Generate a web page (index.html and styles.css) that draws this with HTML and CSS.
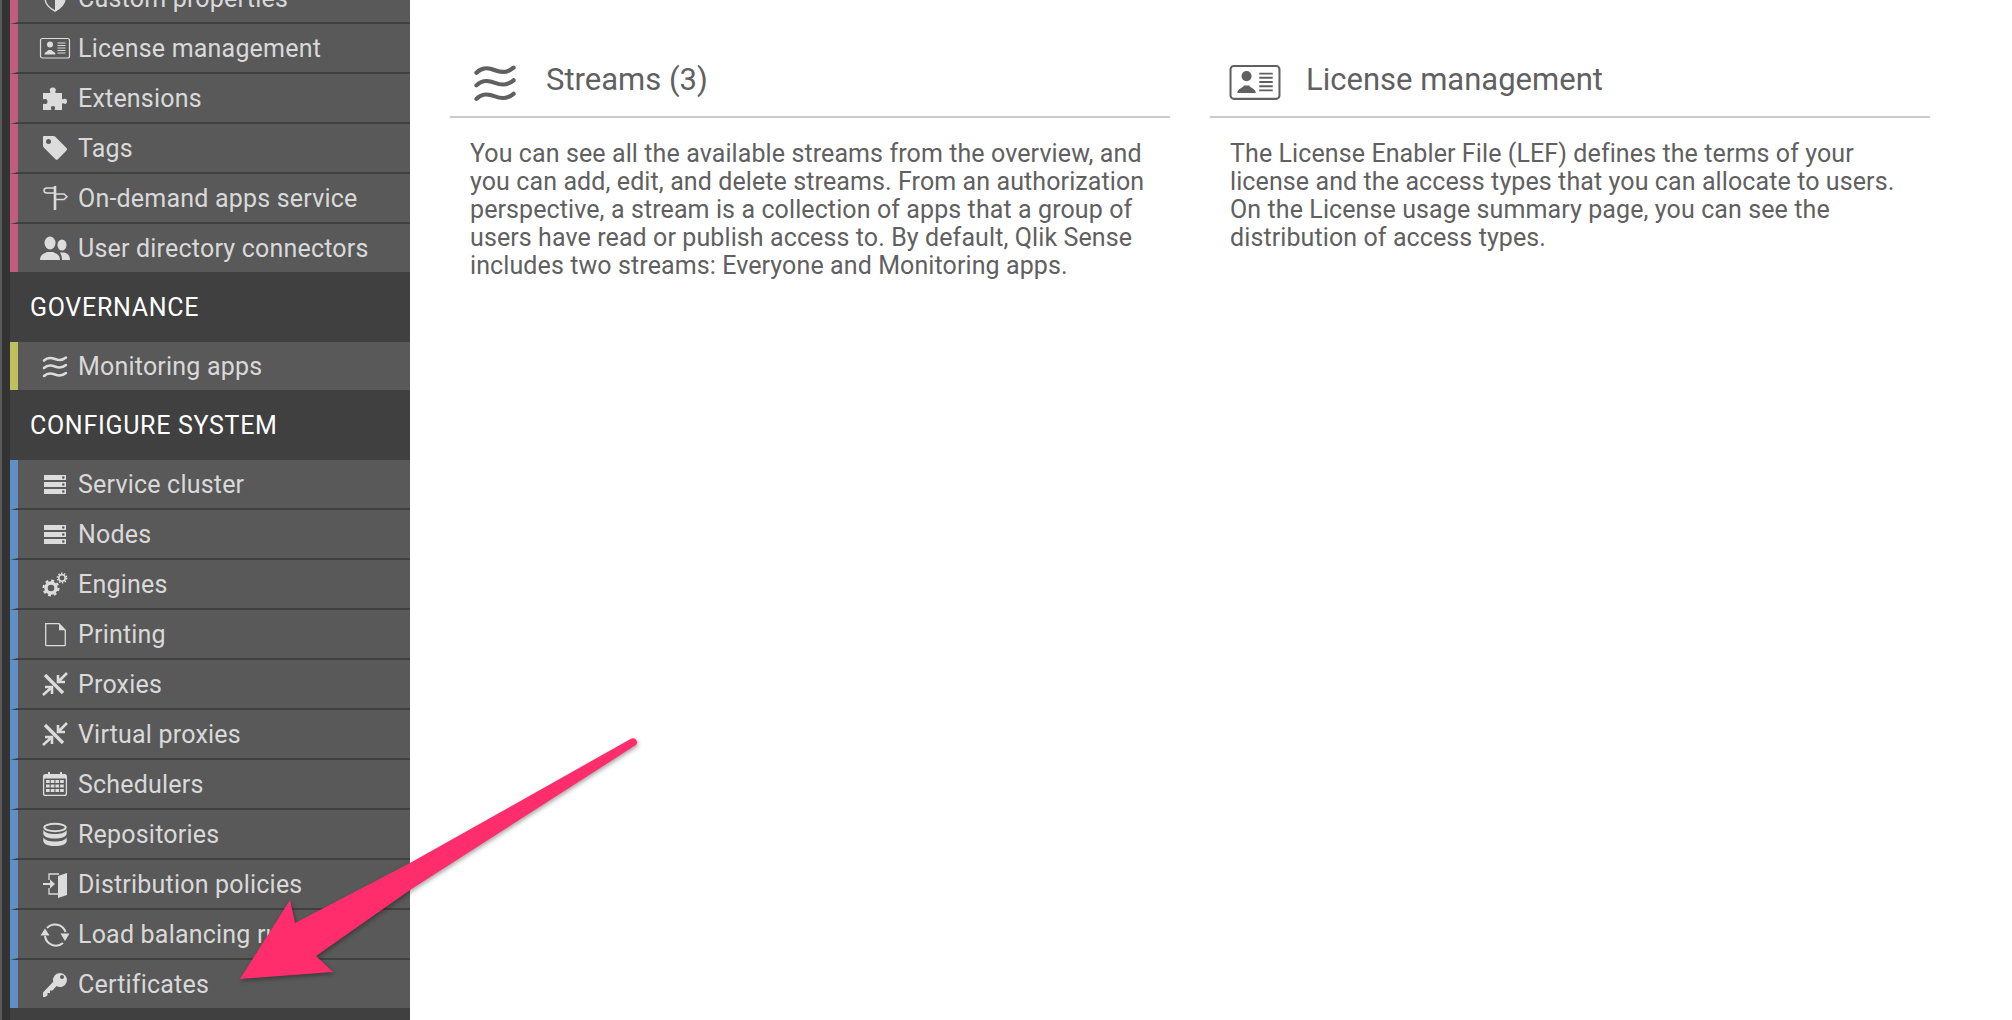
FILE: index.html
```html
<!DOCTYPE html>
<html lang="en">
<head>
    <meta charset="UTF-8">
    <meta name="viewport" content="width=device-width, initial-scale=1.0">
    <title>QMC start</title>
    <link rel="stylesheet" href="styles.css">
</head>
<body>
    <svg class="sprite" xmlns="http://www.w3.org/2000/svg">
        <symbol id="i-shield" viewBox="0 0 32 32">
            <path d="M16 4l10 3v9c0 7-6 11-10 13-4-2-10-6-10-13V7z" fill="none" stroke="currentColor" stroke-width="1.4"/>
            <path d="M16 4l10 3v9c0 7-6 11-10 13z" fill="currentColor"/>
        </symbol>
        <symbol id="i-license" viewBox="0 0 32 32">
            <rect x="1.5" y="6.5" width="29" height="19.500" rx="2" fill="none" stroke="currentColor" stroke-width="1.2"/>
            <circle cx="11" cy="12.500" r="3" fill="currentColor"/>
            <path d="M5.500 22.500c0-2.500 3-3 4-4.500h3c1 1.500 4 2 4 4.500z" fill="currentColor"/>
            <path d="M18.500 11h8M18.500 13.500h8M18.500 16h8M18.500 18.500h8M18.500 21h8" stroke="currentColor" stroke-width="1.1"/>
        </symbol>
        <symbol id="i-puzzle" viewBox="0 0 32 32">
            <path fill="currentColor" d="M4 11h6.500c1 0 1-1 .5-2-.8-1.500.3-3.500 2.800-3.500s3.600 2 2.800 3.500c-.5 1-.5 2 .5 2H23v5.500c0 1 1 1 2 .5 1.200-.7 3-.2 3 2.300s-1.800 3-3 2.300c-1-.5-2-.5-2 .5V28h-6.500c-1 0-1-1-.5-1.800.6-1-.4-2.200-2-2.200s-2.600 1.200-2 2.200c.5.8.5 1.800-.5 1.800H4v-5.500c0-1 1-1 1.800-.6 1 .5 2.700-.2 2.700-2.400s-1.700-2.900-2.700-2.400c-.8.4-1.800.4-1.800-.6z"/>
        </symbol>
        <symbol id="i-tag" viewBox="0 0 32 32">
            <path fill="currentColor" fill-rule="evenodd" d="M5 4h9.500c.8 0 1.300.3 1.800.8L27.500 16c.7.7.7 1.700 0 2.400l-8.600 8.800c-.7.7-1.700.7-2.400 0L5 15.800c-.6-.6-1-1.200-1-2V5c0-.6.4-1 1-1zM7 9.500a2.500 2.500 0 1 0 5 0a2.500 2.500 0 1 0-5 0z"/>
        </symbol>
        <symbol id="i-sign" viewBox="0 0 32 32">
            <path d="M16 4v24" stroke="currentColor" stroke-width="2.600" fill="none"/>
            <path d="M16 6H8c-4 0-4 5 0 5h8M16 12h9l3 2.700-3 2.800h-9" stroke="currentColor" stroke-width="1.500" fill="none"/>
        </symbol>
        <symbol id="i-users" viewBox="0 0 32 32">
            <ellipse cx="11" cy="11" rx="5.500" ry="6.500" fill="currentColor"/>
            <path d="M1 28c0-5 3-6 7-8h6c4 2 7 3 7 8z" fill="currentColor"/>
            <ellipse cx="23" cy="13" rx="4.500" ry="5.500" fill="currentColor"/>
            <path d="M21 20.500h4c3.500 1 6 2.500 6 7.500h-8c0-3-.8-5.500-2-7.500z" fill="currentColor"/>
        </symbol>
        <symbol id="i-waves" viewBox="0 0 32 32">
            <path d="M5 10.500c3-3 6-3.500 11-1.500s8 1 11-1.500M5 18c3-3 6-3.500 11-1.500s8 1 11-1.500M5 26c3-3 6-3.500 11-1.500s8 1 11-1.500" fill="none" stroke="currentColor" stroke-width="2.500" stroke-linecap="round"/>
        </symbol>
        <symbol id="i-server" viewBox="0 0 32 32">
            <path fill="currentColor" fill-rule="evenodd" d="M5 7h22v5H5zM23 9.500a1.300 1.300 0 1 0 2.600 0a1.300 1.300 0 1 0-2.600 0zM5 14h22v5H5zM23 16.500a1.300 1.300 0 1 0 2.600 0a1.300 1.300 0 1 0-2.600 0zM5 21h22v5H5zM23 23.500a1.300 1.300 0 1 0 2.600 0a1.300 1.300 0 1 0-2.600 0z"/>
        </symbol>
        <symbol id="i-gears" viewBox="0 0 32 32">
            <g fill="none" stroke="currentColor">
                <circle cx="12" cy="20" r="5" stroke-width="3.400"/>
                <circle cx="12" cy="20" r="7.400" stroke-width="2.200" stroke-dasharray="2.900 2.900"/>
                <circle cx="23" cy="10" r="3.200" stroke-width="1.600"/>
                <circle cx="23" cy="10" r="4.700" stroke-width="1.400" stroke-dasharray="1.480 1.470"/>
            </g>
        </symbol>
        <symbol id="i-doc" viewBox="0 0 32 32">
            <path d="M6.700 5.700H20l6.300 6.500v14.500a1 1 0 0 1-1 1H7.700a1 1 0 0 1-1-1z" fill="none" stroke="currentColor" stroke-width="1.300"/>
            <path d="M20 5.700l6.300 6.500H20z" fill="currentColor"/>
        </symbol>
        <symbol id="i-proxy" viewBox="0 0 32 32">
            <path d="M6 7l18 18" stroke="currentColor" stroke-width="3.400" fill="none"/>
            <path d="M28 5l-9 9M19 7v7h7M4 27l9-8M6 19h7v7" stroke="currentColor" stroke-width="2.600" fill="none"/>
        </symbol>
        <symbol id="i-calendar" viewBox="0 0 32 32">
            <rect x="4.600" y="6.600" width="22.800" height="20.800" rx="2" fill="none" stroke="currentColor" stroke-width="1.300"/>
            <path d="M5 7h22v3.500H5z" fill="currentColor"/>
            <path d="M10 4v4M22 4v4" stroke="currentColor" stroke-width="2"/>
            <path d="M7 13.500h18M7 18h18M7 22.500h18" stroke="currentColor" stroke-width="3.200" stroke-dasharray="3.700 1"/>
        </symbol>
        <symbol id="i-database" viewBox="0 0 32 32">
            <ellipse cx="16" cy="9.500" rx="10.700" ry="3.700" fill="none" stroke="currentColor" stroke-width="2"/>
            <path fill="currentColor" d="M4.300 12c2 3 6 4 11.700 4s9.700-1 11.700-4v3.500c0 3-5 5-11.700 5s-11.700-2-11.700-5zM4.300 19.500c2 3 6 4 11.700 4s9.700-1 11.700-4v3.500c0 3-5 5-11.700 5s-11.700-2-11.700-5z"/>
        </symbol>
        <symbol id="i-door" viewBox="0 0 32 32">
            <path d="M19 8l9-3v22l-9 3z" fill="currentColor"/>
            <path d="M20 6H10v6M10 20v6h9" fill="none" stroke="currentColor" stroke-width="1.300"/>
            <path d="M4 16h10" stroke="currentColor" stroke-width="2"/>
            <path d="M11 11.500l5 4.500-5 4.500z" fill="currentColor"/>
        </symbol>
        <symbol id="i-sync" viewBox="0 0 32 32">
            <path d="M8 10a11 11 0 0 1 18.500 4M24 25a11 11 0 0 1-18-7" fill="none" stroke="currentColor" stroke-width="2"/>
            <path d="M1.500 17.500h9l-4.500-7zM21.500 15.500h9l-4.500 7.500z" fill="currentColor"/>
        </symbol>
        <symbol id="i-key" viewBox="0 0 32 32">
            <path fill="currentColor" fill-rule="evenodd" d="M21 5a7 7 0 1 1-3.500 13.100L13.500 22.500H11V25H8.500v2.500L6 29H4v-4.500l10.200-10.700A7 7 0 0 1 21 5zM21 9a2 2 0 1 0 4 0a2 2 0 1 0-4 0z"/>
        </symbol>
    </svg>

    <div class="app">
        <aside class="sidebar">
            <nav class="nav">
                <ul class="group pink">
                    <li class="item"><svg class="icon"><use href="#i-shield"/></svg>Custom properties</li>
                    <li class="item"><svg class="icon"><use href="#i-license"/></svg>License management</li>
                    <li class="item"><svg class="icon"><use href="#i-puzzle"/></svg>Extensions</li>
                    <li class="item"><svg class="icon"><use href="#i-tag"/></svg>Tags</li>
                    <li class="item"><svg class="icon"><use href="#i-sign"/></svg>On-demand apps service</li>
                    <li class="item"><svg class="icon"><use href="#i-users"/></svg>User directory connectors</li>
                </ul>
                <h2 class="group-title">GOVERNANCE</h2>
                <ul class="group yellow">
                    <li class="item"><svg class="icon"><use href="#i-waves"/></svg>Monitoring apps</li>
                </ul>
                <h2 class="group-title">CONFIGURE SYSTEM</h2>
                <ul class="group blue">
                    <li class="item"><svg class="icon"><use href="#i-server"/></svg>Service cluster</li>
                    <li class="item"><svg class="icon"><use href="#i-server"/></svg>Nodes</li>
                    <li class="item"><svg class="icon"><use href="#i-gears"/></svg>Engines</li>
                    <li class="item"><svg class="icon"><use href="#i-doc"/></svg>Printing</li>
                    <li class="item"><svg class="icon"><use href="#i-proxy"/></svg>Proxies</li>
                    <li class="item"><svg class="icon"><use href="#i-proxy"/></svg>Virtual proxies</li>
                    <li class="item"><svg class="icon"><use href="#i-calendar"/></svg>Schedulers</li>
                    <li class="item"><svg class="icon"><use href="#i-database"/></svg>Repositories</li>
                    <li class="item"><svg class="icon"><use href="#i-door"/></svg>Distribution policies</li>
                    <li class="item"><svg class="icon"><use href="#i-sync"/></svg>Load balancing rules</li>
                    <li class="item"><svg class="icon"><use href="#i-key"/></svg>Certificates</li>
                </ul>
            </nav>
        </aside>

        <main class="content">
            <section class="panel">
                <header class="panel-head">
                    <svg class="panel-icon"><use href="#i-waves"/></svg>
                    <h1>Streams (3)</h1>
                </header>
                <p>You can see all the available streams from the overview, and you can add, edit, and delete streams. From an authorization perspective, a stream is a collection of apps that a group of users have read or publish access to. By default, Qlik Sense includes two streams: Everyone and Monitoring apps.</p>
            </section>
            <section class="panel">
                <header class="panel-head">
                    <svg class="panel-icon"><use href="#i-license"/></svg>
                    <h1>License management</h1>
                </header>
                <p>The License Enabler File (LEF) defines the terms of your license and the access types that you can allocate to users. On the License usage summary page, you can see the distribution of access types.</p>
            </section>
        </main>
    </div>

    <!-- annotation drawn over the screenshot -->
    <svg class="arrow" viewBox="0 0 2012 1020">
        <path d="M631.500 738.500a4 4 0 0 1 4 6.800L410 890 316 956l17 16-93 7 50-79 5 23 115-60z"/>
    </svg>
</body>
</html>
```

FILE: styles.css
```css
* {
    box-sizing: border-box;
}
html, body {
    height: 100%;
}
body {
    margin: 0;
    background: #fff;
    font-family: Roboto, "Open Sans", sans-serif;
    overflow: hidden;
}
.sprite {
    display: none;
}
.app {
    display: flex;
    height: 1020px;
}

/* left menu */
.sidebar {
    width: 410px;
    flex: none;
    height: 100%;
    overflow: hidden;
    background: #333;
    border-left: 2px solid #5a5a5a;
    padding-left: 8px;
}
.nav {
    margin-top: -26px;
    padding-bottom: 40px;
    background: #404040;
}
.group {
    list-style: none;
    margin: 0;
    padding: 0;
}
.group-title {
    display: flex;
    align-items: center;
    height: 70px;
    margin: 0;
    padding-left: 20px;
    color: #fff;
    font-size: 25px;
    font-weight: 400;
    letter-spacing: 0.7px;
}
.item {
    display: flex;
    align-items: center;
    gap: 7px;
    height: 50px;
    padding-left: 21px;
    background: #595959;
    border-left: 8px solid #5f90c5;
    border-bottom: 2px solid #404040;
    color: #d9d9d9;
    font-size: 25px;
    letter-spacing: 0.2px;
    white-space: nowrap;
}
.item:last-child {
    height: 48px;
    border-bottom: none;
}
.pink .item {
    border-left-color: #c05d7f;
}
.yellow .item {
    border-left-color: #bfbf5f;
}
.icon {
    width: 32px;
    height: 32px;
    flex: none;
    color: #dcdcdc;
}

/* overview panels */
.content {
    display: flex;
    flex: 1;
    gap: 40px;
    padding-left: 40px;
}
.panel {
    width: 720px;
    color: #606060;
}
.panel-head {
    display: flex;
    align-items: center;
    gap: 24px;
    padding: 55px 0 7px 18px;
    border-bottom: 2px solid #ccc;
}
.panel-icon {
    width: 54px;
    height: 54px;
    flex: none;
}
.panel-head h1 {
    margin: 0 0 6px;
    font-size: 31px;
    font-weight: 400;
}
.panel p {
    margin: 22px 0 0;
    padding: 0 20px;
    font-size: 25px;
    letter-spacing: 0.1px;
    line-height: 28px;
}

/* pink arrow */
.arrow {
    position: absolute;
    left: 0;
    top: 0;
    width: 2012px;
    height: 1020px;
    filter: drop-shadow(1px 2px 2px rgba(0, 0, 0, 0.35));
}
.arrow path {
    fill: #ff2d6b;
}
```
